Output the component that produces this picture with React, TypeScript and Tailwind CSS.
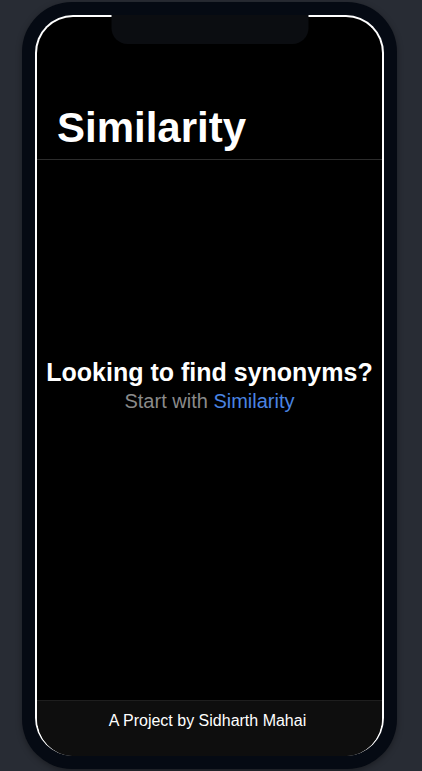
import React from "react";

export default function App() {
  return (
    <div
      className="min-h-screen w-full bg-[#282c34] flex"
      style={{ fontFamily: '"Liberation Sans", Arial, sans-serif' }}
    >
      <div className="relative ml-[22px] mt-[2px] h-[767px] w-[375px] rounded-[50px] bg-[#050a13] p-[13px] shadow-[0_2px_6px_rgba(0,0,0,0.35)]">
        <div className="flex h-full flex-col overflow-hidden rounded-[38px] border-x-2 border-t-2 border-white bg-black">
          <header className="flex h-[143px] shrink-0 items-end border-b border-[#2c2c2c] pb-[10px] pl-[20px]">
            <h1 className="text-[42px] font-bold leading-[42px] text-white">Similarity</h1>
          </header>
          <main className="flex flex-1 flex-col items-center pt-[197px]">
            <h2 className="text-[25px] font-bold leading-[30px] text-white">Looking to find synonyms?</h2>
            <p className="mt-[2px] text-[20px] leading-[24px] text-[#8a8a8a]">
              Start with <span className="text-[#4a84e2]">Similarity</span>
            </p>
          </main>
          <footer className="h-[56px] shrink-0 border-t border-[#1e1e1e] bg-[#0e0e0e] pr-[4px] pt-[8px] text-center text-[16px] leading-[24px] text-white">
            A Project by Sidharth Mahai
          </footer>
        </div>
        <div className="absolute left-1/2 top-[13px] h-[29px] w-[197px] -translate-x-1/2 rounded-b-[16px] bg-[#0b0d11]" />
      </div>
    </div>
  );
}
